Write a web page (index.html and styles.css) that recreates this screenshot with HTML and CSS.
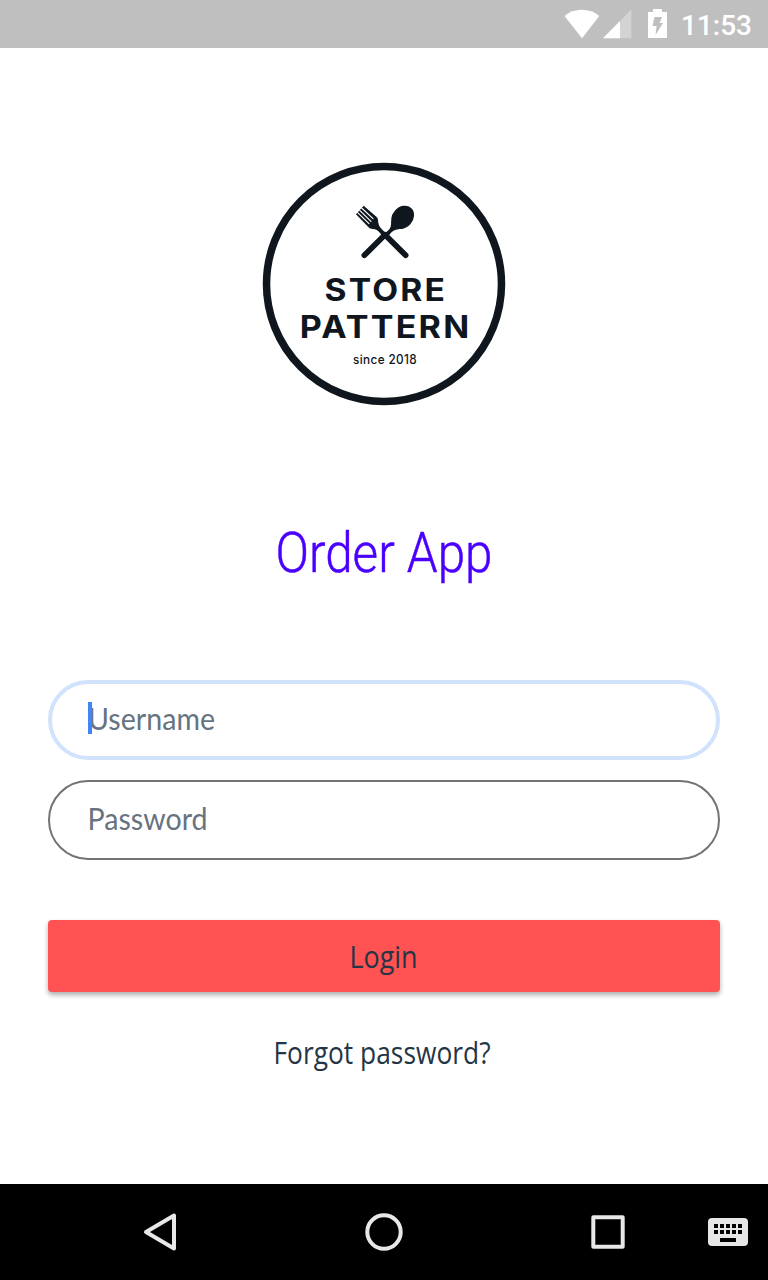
FILE: index.html
```html
<!DOCTYPE html>
<html lang="en">
<head>
<meta charset="utf-8">
<title>Order App</title>
<link rel="stylesheet" href="styles.css">
</head>
<body>
<div class="screen">
  <header class="status">
    <svg class="status-icons" viewBox="0 0 110 48">
      <path fill="#fff" d="M4.5 16C14 7.7 29.500 7.700 39.300 16L22 38.200Z"/>
      <path fill="#d3d3d3" d="M43 38.200L71.300 9.500V38.200Z"/>
      <path fill="#fff" d="M43 38.200L60 21V38.200Z"/>
      <path fill="#fff" d="M88 12h5V9h9v3h5v26H88Z"/>
      <path fill="#bfbfbf" d="M94.500 17h7.500l-2.500 6h3.500l-7.500 12 1-9H92.500Z"/>
    </svg>
    <svg class="clock" viewBox="0 0 86 48"><text x="11" y="35.300" textLength="71" lengthAdjust="spacingAndGlyphs">11:53</text></svg>
  </header>
  <main class="login">
    <svg class="logo" viewBox="256 156 256 256">
      <circle class="ring" cx="384" cy="284" r="117.500"/>
      <g class="cutlery" transform="translate(340 190) scale(.33333)">
        <path d="M71 47L110 81Q116 87 115 98Q117 111 130 122L142 132L128 145L121 130Q111 117 98 117Q89 117 85 111L48 73Z"/>
        <path class="gap" d="M65 54L99 86M59 61L93 94M53 68L87 101"/>
        <ellipse cx="188" cy="82" rx="31" ry="38" transform="rotate(42 188 82)"/>
        <path d="M153 92Q156 113 142 124L128 134L140 145L150 132Q159 118 180 117Z"/>
        <path class="handle" d="M135 134L73 196M135 134L197 196"/>
      </g>
      <text class="brand" x="324.500" y="301.300" textLength="122.500" lengthAdjust="spacingAndGlyphs">STORE</text>
      <text class="brand" x="299.800" y="337.600" textLength="171.500" lengthAdjust="spacingAndGlyphs">PATTERN</text>
      <text class="since" x="353" y="363.800" textLength="64" lengthAdjust="spacingAndGlyphs">since 2018</text>
    </svg>
    <svg class="title" viewBox="0 0 240 90"><text x="11.500" y="61.500" textLength="217" lengthAdjust="spacingAndGlyphs">Order App</text></svg>
    <div class="field focused">
      <svg class="label" viewBox="0 0 180 72"><text x="0" y="46" textLength="127" lengthAdjust="spacingAndGlyphs">Username</text></svg>
      <span class="caret"></span>
    </div>
    <div class="field">
      <svg class="label" viewBox="0 0 180 72"><text x="-.5" y="46" textLength="120" lengthAdjust="spacingAndGlyphs">Password</text></svg>
    </div>
    <div class="button">
      <svg class="action" viewBox="0 0 250 72"><text x="90.500" y="48" textLength="68" lengthAdjust="spacingAndGlyphs">Login</text></svg>
    </div>
    <svg class="action forgot" viewBox="0 0 250 72"><text x="14.500" y="48" textLength="217" lengthAdjust="spacingAndGlyphs">Forgot password?</text></svg>
  </main>
  <nav class="nav">
    <svg viewBox="0 0 768 96">
      <g fill="none" stroke="#e8e8e8" stroke-width="4" stroke-linejoin="round">
        <path d="M146 48L174 31.500V64.500Z"/>
        <circle cx="384" cy="48" r="16.700"/>
        <rect x="593.300" y="33.300" width="29.400" height="29.400"/>
      </g>
      <rect x="708" y="34" width="40" height="28" rx="4" fill="#e6e6e6"/>
      <path stroke="#000" stroke-width="4" d="M714 42h28M714 48h28" stroke-dasharray="4 2"/>
      <path stroke="#000" stroke-width="4" d="M720 56h16"/>
    </svg>
  </nav>
</div>
</body>
</html>
```
FILE: styles.css
```css
body { margin: 0; background: #fff; }
svg { display: block; overflow: visible; }
.screen { width: 768px; height: 1280px; display: flex; flex-direction: column; background: #fff; }
.status { height: 48px; background: #bfbfbf; display: flex; padding-left: 560px; }
.status-icons { width: 110px; height: 48px; }
.clock { width: 86px; height: 48px; font: 500 28px Roboto, sans-serif; fill: #fff; }
.login { flex: 1; display: flex; flex-direction: column; align-items: center; padding: 108px 48px 0; box-sizing: border-box; }
.logo { width: 256px; height: 256px; }
.ring { fill: none; stroke: #0f161e; stroke-width: 7.5px; }
.cutlery { fill: #0f161e; }
.gap { fill: none; stroke: #fff; stroke-width: 3.5px; stroke-linecap: round; }
.handle { fill: none; stroke: #0f161e; stroke-width: 17px; stroke-linecap: round; }
.brand { font: 700 31px Inter, sans-serif; letter-spacing: 2px; fill: #0f161e; }
.since { font: 500 12.5px Inter, sans-serif; letter-spacing: .4px; fill: #0f161e; }
.title { width: 240px; height: 90px; margin: 98px 0 80px; font: 300 56px Roboto, sans-serif; fill: #4a00ff; stroke: #4a00ff; stroke-width: .5px; stroke-linejoin: round; }
.field { position: relative; width: 672px; height: 80px; box-sizing: border-box; border: 2px solid #737373; border-radius: 40px; padding: 2px 38px; margin-bottom: 20px; }
.focused { border: 4px solid #d0e2fc; padding: 0 36px; }
.label { width: 180px; height: 72px; font: 400 31.5px Lato, sans-serif; fill: #67737f; }
.caret { position: absolute; left: 36px; top: 18px; width: 4px; height: 32px; background: #4285f4; }
.button { width: 672px; height: 72px; margin-top: 40px; background: #ff5252; border-radius: 4px; display: flex; justify-content: center; box-shadow: 0 3px 5px rgba(0, 0, 0, .32); }
.action { width: 250px; height: 72px; font: 400 31px "Open Sans", sans-serif; fill: #263545; }
.forgot { margin-top: 24px; }
.nav { height: 96px; background: #000; }
.nav svg { width: 768px; height: 96px; }
```
